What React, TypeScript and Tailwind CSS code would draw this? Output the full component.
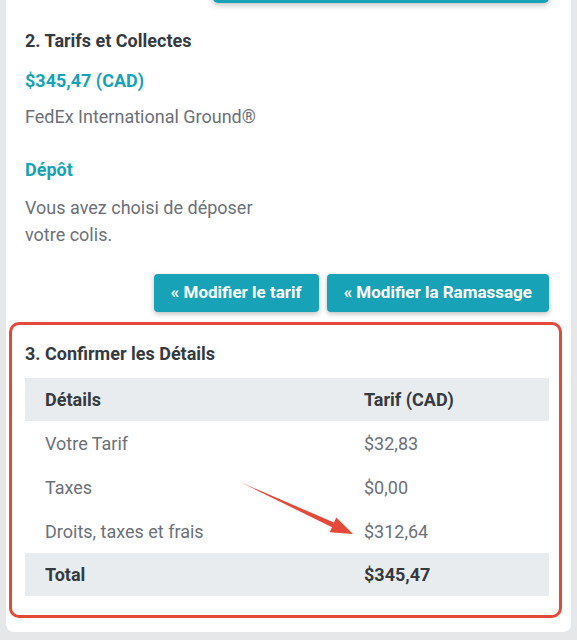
import React from 'react';

const rows = [
  { label: 'Votre Tarif', value: '$32,83' },
  { label: 'Taxes', value: '$0,00' },
  { label: 'Droits, taxes et frais', value: '$312,64' },
];

export default function App() {
  return (
    <div className="relative w-[577px] h-[640px] overflow-hidden bg-[#e6e7e9] px-[6px] pb-[8px]" style={{ fontFamily: 'Roboto, "Liberation Sans", sans-serif' }}>
      <div className="bg-white rounded-b-[8px] h-full">
        {/* previous step button, only its bottom edge shows */}
        <div className="flex justify-end pr-[22px]">
          <div className="w-[336px] h-[40px] -mt-[37px] rounded-[5px] bg-[#18a2b8] shadow-[0_2px_6px_rgba(0,0,0,0.25)]" />
        </div>

        {/* 2. Tarifs et Collectes */}
        <div className="px-[19px] pt-[26px]">
          <h2 className="text-[18px] leading-[24px] font-bold text-[#343a40]">2. Tarifs et Collectes</h2>
          <p className="mt-[16px] text-[18px] leading-[24px] font-bold text-[#18a2b8]">$345,47 (CAD)</p>
          <p className="mt-[12px] text-[18px] leading-[24px] text-[#6c7177]">FedEx International Ground®</p>

          <p className="mt-[29px] text-[18px] leading-[24px] font-bold text-[#18a2b8]">Dépôt</p>
          <p className="mt-[12px] w-[270px] text-[18px] leading-[27px] text-[#6c7177]">
            Vous avez choisi de déposer votre colis.
          </p>

          <div className="mt-[26px] flex justify-end gap-[8px] pr-[3px]">
            <button className="h-[38px] px-[17px] rounded-[4px] bg-[#18a2b8] text-white text-[17px] font-bold shadow-[0_2px_5px_rgba(0,0,0,0.25)]">
              « Modifier le tarif
            </button>
            <button className="h-[38px] px-[17px] rounded-[4px] bg-[#18a2b8] text-white text-[17px] font-bold shadow-[0_2px_5px_rgba(0,0,0,0.25)]">
              « Modifier la Ramassage
            </button>
          </div>
        </div>

        {/* 3. Confirmer les Détails (highlighted) */}
        <div className="mt-[10px] ml-[3px] mr-[9px] h-[296px] rounded-[10px] border-[3px] border-[#e5493a] px-[13px] pt-[17px]">
          <h2 className="text-[18px] leading-[24px] font-bold text-[#343a40]">3. Confirmer les Détails</h2>
          <table className="mt-[12px] w-[524px] border-collapse text-[18px]">
            <thead>
              <tr className="bg-[#e9ecef] h-[43px]">
                <th className="w-[319px] pl-[20px] text-left font-bold text-[#343a40]">Détails</th>
                <th className="pl-[20px] text-left font-bold text-[#343a40]">Tarif (CAD)</th>
              </tr>
            </thead>
            <tbody>
              {rows.map((r) => (
                <tr key={r.label} className="h-[44px]">
                  <td className="pl-[20px] text-[#6c7177]">{r.label}</td>
                  <td className="pl-[20px] text-[#6c7177]">{r.value}</td>
                </tr>
              ))}
              <tr className="bg-[#e9ecef] h-[43px]">
                <td className="pl-[20px] font-bold text-[#343a40]">Total</td>
                <td className="pl-[20px] font-bold text-[#343a40]">$345,47</td>
              </tr>
            </tbody>
          </table>
        </div>
      </div>

      {/* annotation arrow */}
      <svg className="absolute left-0 top-0 pointer-events-none" width="577" height="640" viewBox="0 0 577 640">
        <polygon
          points="240,482 334,522.6 336.3,517.6 353,534 329.7,532.2 332,527.2"
          fill="#e5493a"
        />
      </svg>
    </div>
  );
}
